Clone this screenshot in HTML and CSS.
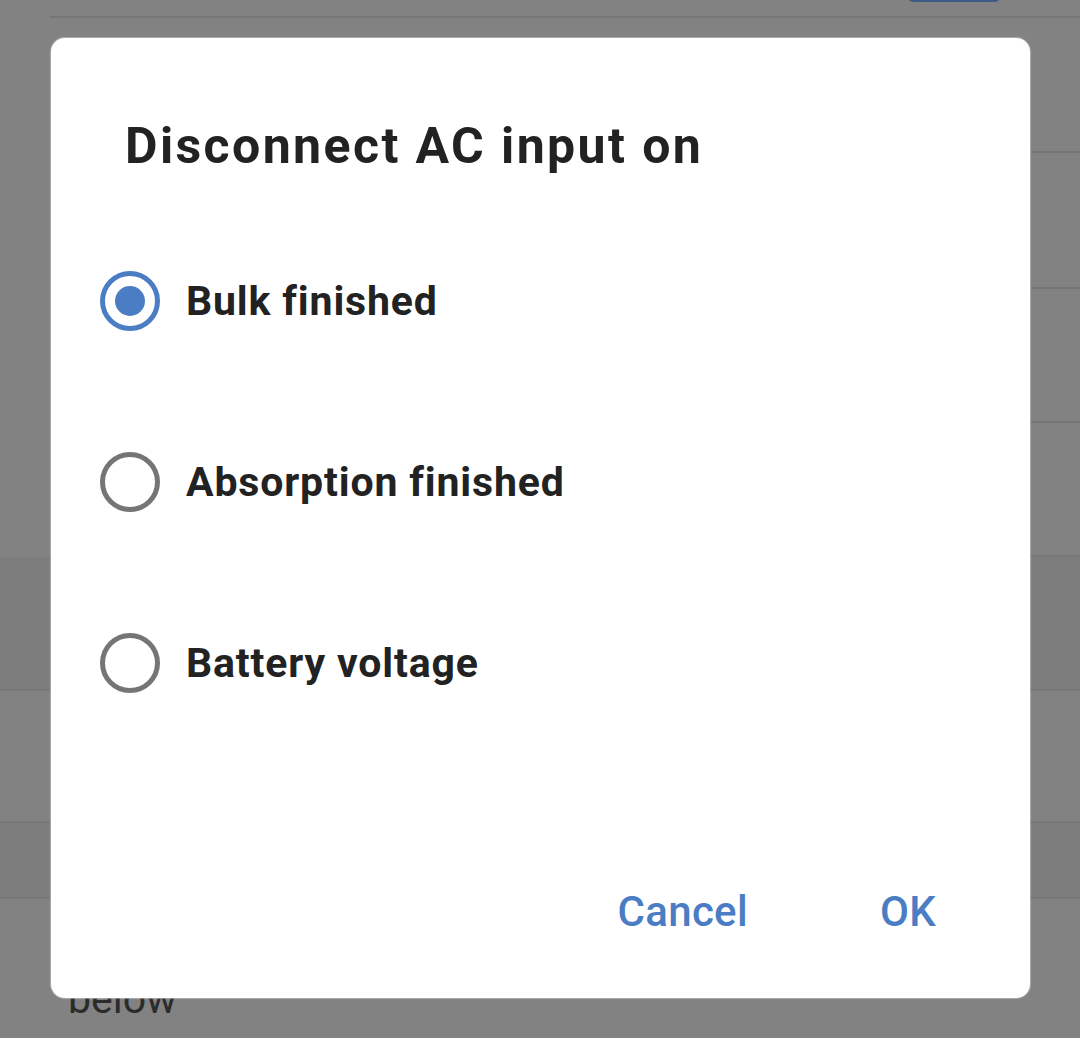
FILE: index.html
```html
<!DOCTYPE html>
<html>
<head>
<meta charset="utf-8">
<link rel="stylesheet" href="styles.css">
</head>
<body>
<div class="screen">
  <div class="bg-list">
    <div class="bg-top"><div class="bg-toggle"></div></div>
    <div class="bg-row inset h135"></div>
    <div class="bg-row inset h136"></div>
    <div class="bg-row inset h134"></div>
    <div class="bg-row inset h134"></div>
    <div class="bg-row full dark h134"></div>
    <div class="bg-row full h132"></div>
    <div class="bg-row full dark h76"></div>
    <div class="bg-row full last"><span class="bg-text">below</span></div>
  </div>
  <div class="dialog">
    <h1 class="title">Disconnect AC input on</h1>
    <div class="options">
      <div class="option">
        <span class="radio checked"><span class="dot"></span></span>
        <span class="label">Bulk finished</span>
      </div>
      <div class="option">
        <span class="radio"></span>
        <span class="label">Absorption finished</span>
      </div>
      <div class="option">
        <span class="radio"></span>
        <span class="label">Battery voltage</span>
      </div>
    </div>
    <div class="actions">
      <span class="btn">Cancel</span>
      <span class="btn">OK</span>
    </div>
  </div>
</div>
</body>
</html>
```
FILE: styles.css
```css
html, body {
  margin: 0;
  padding: 0;
}
body {
  background: #828282;
  font-family: Roboto, "Noto Sans", sans-serif;
  width: 1080px;
  height: 1038px;
  overflow: hidden;
}
.screen {
  position: relative;
  width: 1080px;
  height: 1038px;
}
.bg-list {
  display: flex;
  flex-direction: column;
}
.bg-top {
  height: 16px;
  border-bottom: 2px solid #767676;
  margin-left: 50px;
  position: relative;
}
.bg-toggle {
  position: absolute;
  left: 858px;
  top: -8px;
  width: 92px;
  height: 10px;
  border-radius: 6px;
  background: #3e5a86;
}
.bg-row {
  border-bottom: 2px solid #767676;
  box-sizing: border-box;
}
.bg-row.inset { margin-left: 50px; }
.bg-row.dark { background: #7d7d7d; }
.h135 { height: 135px; }
.h136 { height: 136px; }
.h134 { height: 134px; }
.h132 { height: 132px; }
.h76 { height: 76px; }
.bg-row.last {
  border-bottom: none;
  height: 140px;
  padding-left: 68px;
  padding-top: 77px;
}
.bg-text {
  font-family: Roboto, sans-serif;
  font-size: 41px;
  color: #2b2b2b;
  display: inline-block;
  line-height: 47px;
}
.dialog {
  position: absolute;
  left: 51px;
  top: 38px;
  width: 979px;
  height: 960px;
  background: #ffffff;
  border-radius: 14px;
  box-shadow: 0 0 1px 1px rgba(200,200,200,0.6);
  box-sizing: border-box;
  display: flex;
  flex-direction: column;
}
.title {
  margin: 0;
  padding: 78px 0 0 74px;
  font-size: 50px;
  font-weight: 700;
  color: #222222;
  line-height: 60px;
  letter-spacing: 2.4px;
}
.options {
  display: flex;
  flex-direction: column;
  padding-top: 34px;
}
.option {
  display: flex;
  align-items: center;
  height: 181px;
  padding-left: 49px;
}
.radio {
  width: 60px;
  height: 60px;
  box-sizing: border-box;
  border: 5px solid #757575;
  border-radius: 50%;
  display: flex;
  align-items: center;
  justify-content: center;
  flex: none;
}
.radio.checked {
  border-color: #4a7dc4;
}
.dot {
  width: 30px;
  height: 30px;
  border-radius: 50%;
  background: #4a7dc4;
}
.label {
  margin-left: 26px;
  font-size: 41px;
  font-weight: 700;
  color: #222222;
  letter-spacing: 0.85px;
}
.actions {
  margin-top: auto;
  display: flex;
  justify-content: flex-end;
  gap: 132px;
  padding: 0 94px 56px 0;
}
.btn {
  font-size: 42px;
  font-weight: 500;
  color: #4a7dc4;
  line-height: 60px;
  letter-spacing: 0.3px;
}
```
